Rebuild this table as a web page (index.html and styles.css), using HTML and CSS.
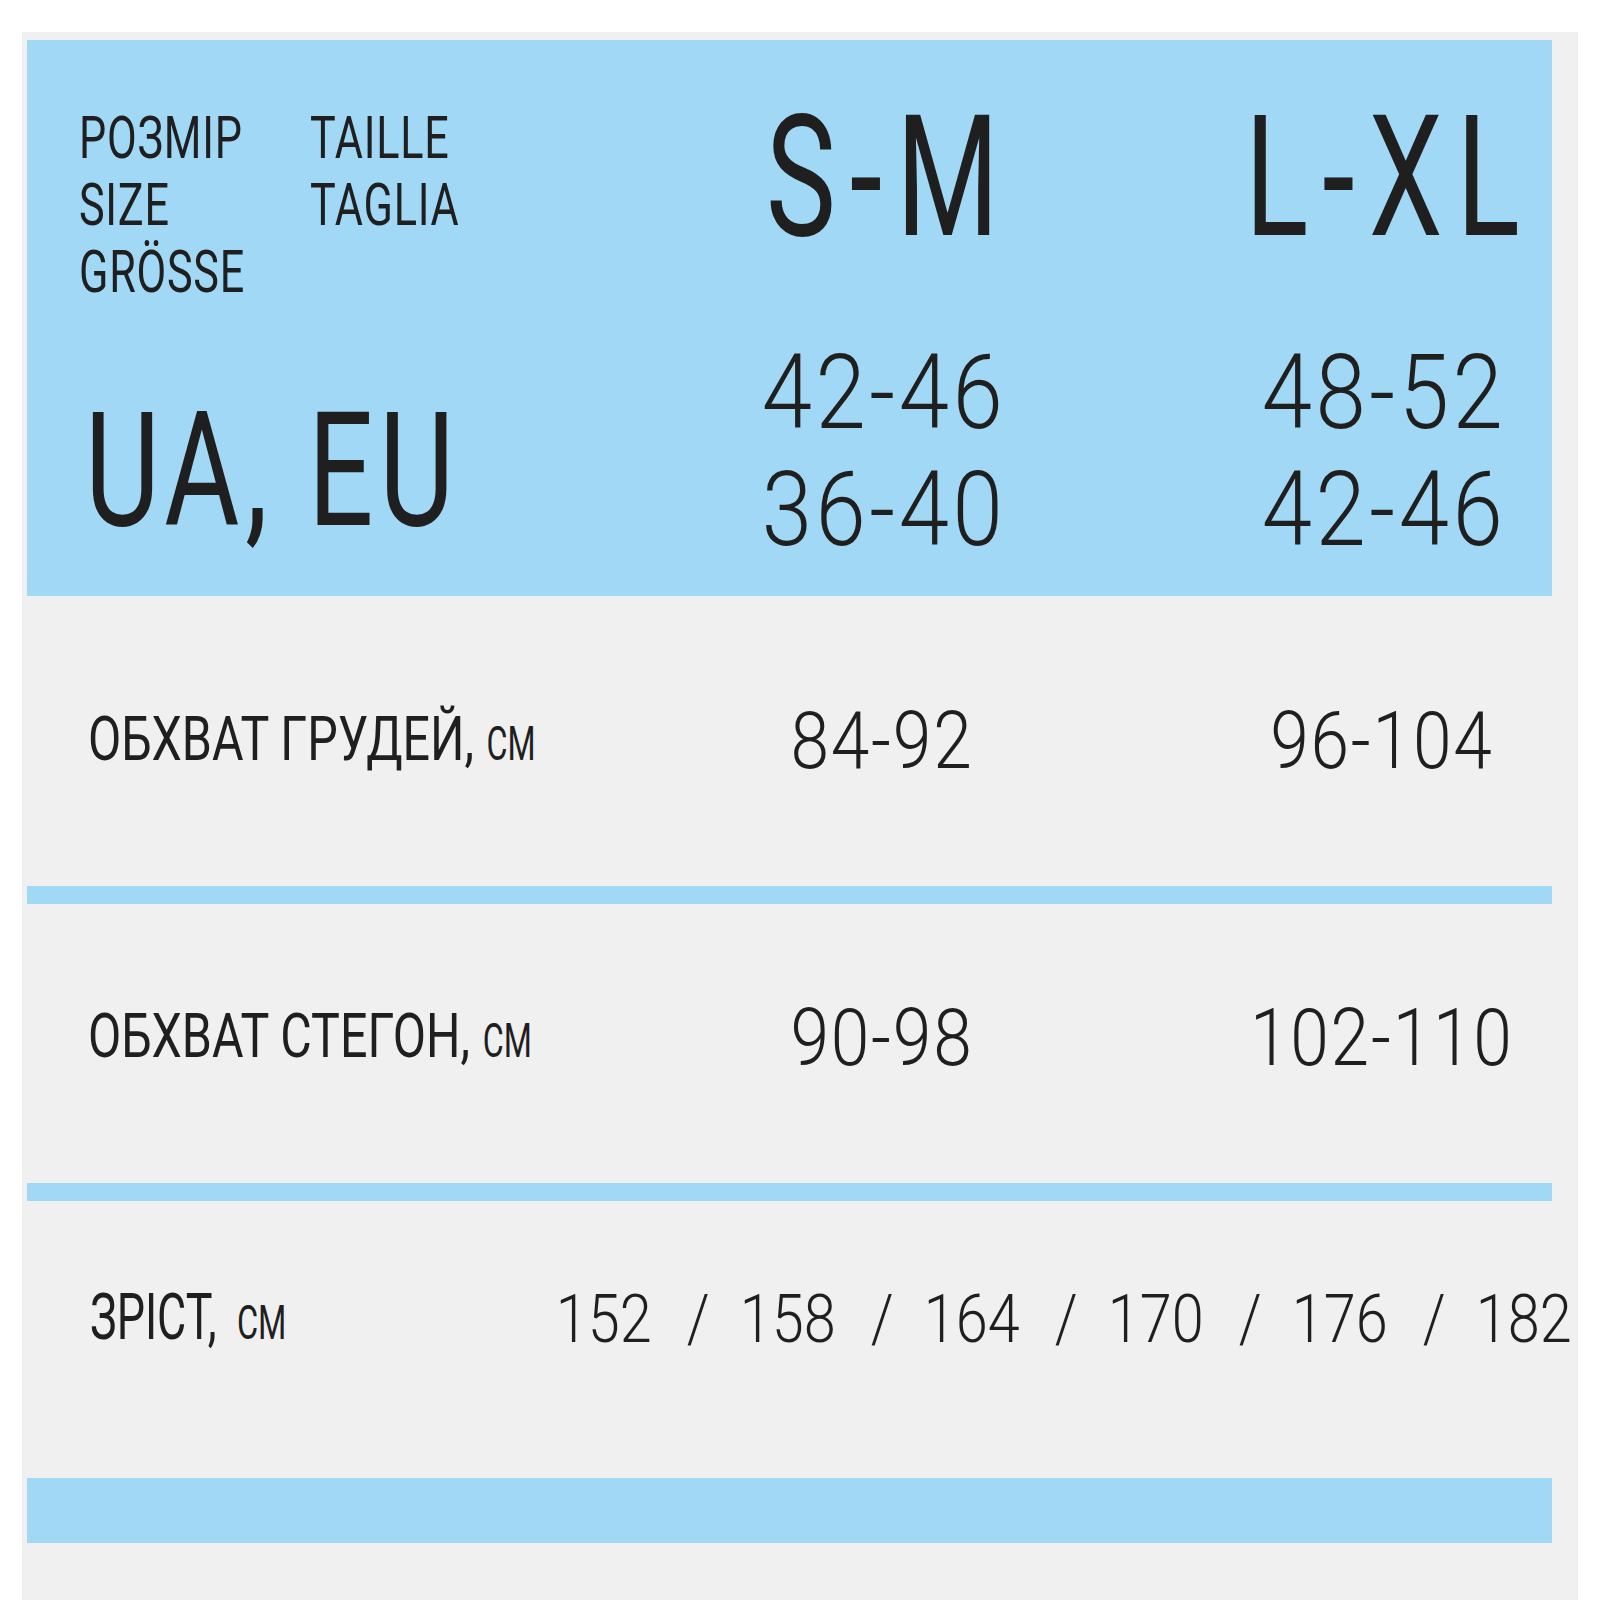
FILE: index.html
```html
<!DOCTYPE html>
<html lang="uk">
<head>
<meta charset="utf-8">
<title>Розмірна сітка</title>
<link rel="stylesheet" href="styles.css">
</head>
<body>
<div class="sheet">
  <section class="header">
    <div class="hcol-label">
      <div class="labels">
        <div class="lab-col">
          <div class="lab"><span class="sq">РОЗМІР</span></div>
          <div class="lab"><span class="sq">SIZE</span></div>
          <div class="lab"><span class="sq">GRÖSSE</span></div>
        </div>
        <div class="lab-col">
          <div class="lab"><span class="sq">TAILLE</span></div>
          <div class="lab"><span class="sq">TAGLIA</span></div>
        </div>
      </div>
      <div class="region"><span class="sq">UA, EU</span></div>
    </div>
    <div class="hcol-size">
      <div class="size"><span class="sq">S-M</span></div>
      <div class="eu-group">
        <div class="eu"><span class="sq">42-46</span></div>
        <div class="eu"><span class="sq">36-40</span></div>
      </div>
    </div>
    <div class="hcol-size right">
      <div class="size"><span class="sq">L-XL</span></div>
      <div class="eu-group">
        <div class="eu"><span class="sq">48-52</span></div>
        <div class="eu"><span class="sq">42-46</span></div>
      </div>
    </div>
  </section>

  <section class="row row-chest">
    <div class="row-label"><span class="sq">ОБХВАТ ГРУДЕЙ,<span class="unit">СМ</span></span></div>
    <div class="row-val"><span class="sq">84-92</span></div>
    <div class="row-val right"><span class="sq">96-104</span></div>
  </section>
  <div class="stripe"></div>

  <section class="row row-hips">
    <div class="row-label"><span class="sq">ОБХВАТ СТЕГОН,<span class="unit">СМ</span></span></div>
    <div class="row-val"><span class="sq">90-98</span></div>
    <div class="row-val right"><span class="sq">102-110</span></div>
  </section>
  <div class="stripe"></div>

  <section class="row-height">
    <div class="row-label"><span class="sq">ЗРІСТ,<span class="unit">СМ</span></span></div>
    <div class="heights">
      <div class="hv num"><span class="sq">152</span></div>
      <div class="hv"><span class="sq">/</span></div>
      <div class="hv num"><span class="sq">158</span></div>
      <div class="hv"><span class="sq">/</span></div>
      <div class="hv num"><span class="sq">164</span></div>
      <div class="hv"><span class="sq">/</span></div>
      <div class="hv num"><span class="sq">170</span></div>
      <div class="hv"><span class="sq">/</span></div>
      <div class="hv num"><span class="sq">176</span></div>
      <div class="hv"><span class="sq">/</span></div>
      <div class="hv num"><span class="sq">182</span></div>
    </div>
  </section>
  <div class="bottom"></div>
</div>
</body>
</html>
```

FILE: styles.css
```css
body {
  margin: 0;
  background: #ffffff;
  font-family: Roboto, "Liberation Sans", sans-serif;
  font-weight: 400;
  color: #1f1f1f;
}

.sheet {
  margin: 32px 0 0 22px;
  width: 1556px;
  box-sizing: border-box;
  padding: 8px 26px 57px 5px;
  background: #f0f0f0;
}

.sq {
  display: inline-block;
  transform-origin: left center;
  white-space: nowrap;
}

/* header */
.header {
  background: #a1d8f5;
  height: 556px;
  display: grid;
  grid-template-columns: 655px 400px 470px;
}

.hcol-label {
  padding: 64px 0 0 52px;
}

.labels {
  display: flex;
}

.lab-col {
  width: 231px;
}

.lab {
  font-size: 60px;
  line-height: 67px;
  height: 67px;
  white-space: nowrap;
}

.lab .sq {
  transform: scaleX(0.72);
  letter-spacing: 1px;
}

.region {
  margin-top: 86px;
  margin-left: 6px;
  font-size: 160px;
  line-height: 160px;
  white-space: nowrap;
}

.region .sq {
  transform: scaleX(0.72);
  letter-spacing: 8px;
}

.hcol-size {
  padding-top: 51px;
  text-align: center;
}

.hcol-size.right {
  padding-left: 130px;
}

.size {
  font-size: 168px;
  line-height: 173px;
  padding-left: 14px;
}

.size .sq {
  margin: 0 -60px;
  transform: scaleX(0.7);
  transform-origin: center;
  letter-spacing: 20px;
}

.eu-group {
  margin-top: 70px;
}

.eu {
  font-size: 103px;
  line-height: 117px;
  padding-left: 4px;
  font-weight: 300;
}

.eu .sq {
  transform: scaleX(0.88);
  transform-origin: center;
  letter-spacing: 4px;
}

/* rows */
.row {
  display: grid;
  grid-template-columns: 655px 400px 470px;
  align-items: center;
  box-sizing: border-box;
}

.row-chest {
  height: 290px;
}

.row-hips {
  height: 279px;
  padding-bottom: 10px;
}

.stripe {
  height: 18px;
  background: #a1d8f5;
}

.row-label {
  padding-left: 61px;
  font-size: 62px;
  line-height: 62px;
  white-space: nowrap;
}

.row-label .sq {
  transform: scaleX(0.78);
}

.unit {
  display: inline-block;
  font-size: 48px;
  margin-left: 16px;
  transform: scaleX(0.86);
  transform-origin: left center;
}

.row-val {
  font-size: 79px;
  line-height: 79px;
  text-align: center;
  font-weight: 300;
}

.row-val .sq {
  transform: scaleX(0.88);
  transform-origin: center;
  letter-spacing: 2px;
}

.row-val.right {
  padding-left: 130px;
}

.row-height {
  display: flex;
  align-items: center;
  height: 277px;
  padding-bottom: 40px;
  box-sizing: border-box;
}

.row-height .row-label {
  flex: none;
  width: 533px;
  box-sizing: border-box;
  padding-left: 63px;
  font-size: 65px;
  line-height: 65px;
}

.row-height .row-label .sq {
  transform: scaleX(0.69);
}

.row-height .unit {
  margin-left: 30px;
  transform: scaleX(0.98);
}

.heights {
  display: flex;
  flex: none;
}

.hv {
  flex: none;
  width: 92px;
  text-align: center;
  font-size: 67px;
  line-height: 67px;
  font-weight: 300;
}

.hv .sq {
  transform: scaleX(0.86);
  transform-origin: center;
}

.hv.num .sq {
  transform: translateX(-12px) scaleX(0.86);
}

.bottom {
  height: 65px;
  background: #a1d8f5;
}
```
